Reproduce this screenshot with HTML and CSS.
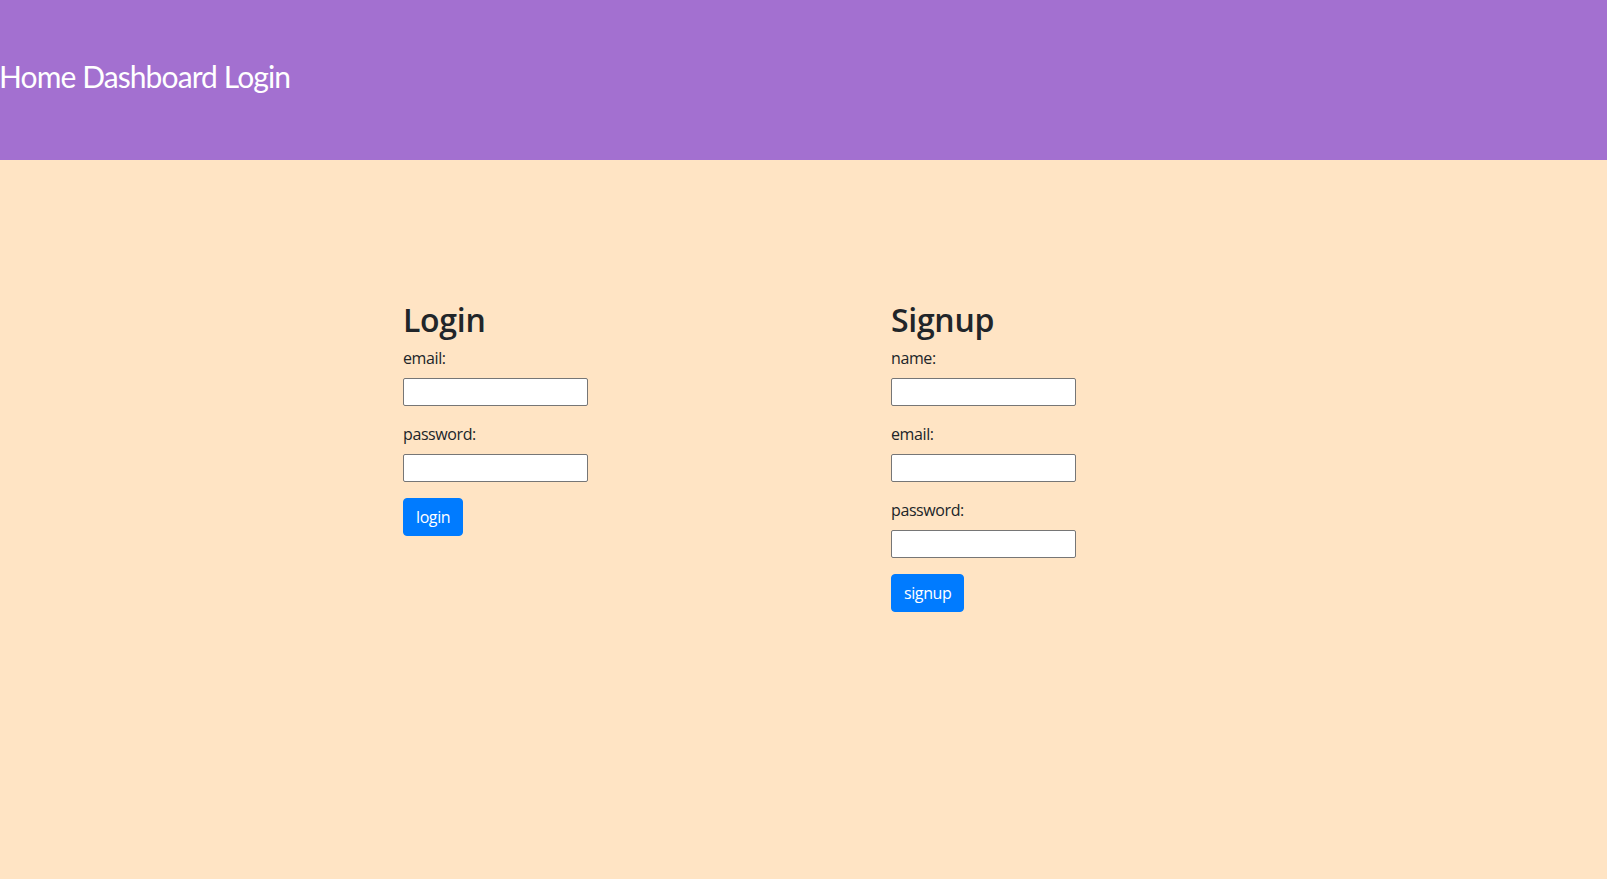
FILE: index.html
```html
<!DOCTYPE html>
<html lang="en">
<head>
<meta charset="utf-8">
<title>Login</title>
<link rel="stylesheet" href="styles.css">
</head>
<body>
<header class="topbar">
  <nav class="nav">
    <a class="nav-link" href="#">Home</a>
    <a class="nav-link" href="#">Dashboard</a>
    <a class="nav-link" href="#">Login</a>
  </nav>
</header>
<main class="main">
  <div class="forms">
    <section class="col">
      <h2 class="title">Login</h2>
      <form>
        <div class="form-group">
          <label class="label">email:</label>
          <input class="field" type="email">
        </div>
        <div class="form-group">
          <label class="label">password:</label>
          <input class="field" type="password">
        </div>
        <button class="btn" type="button">login</button>
      </form>
    </section>
    <section class="col">
      <h2 class="title">Signup</h2>
      <form>
        <div class="form-group">
          <label class="label">name:</label>
          <input class="field" type="text">
        </div>
        <div class="form-group">
          <label class="label">email:</label>
          <input class="field" type="email">
        </div>
        <div class="form-group">
          <label class="label">password:</label>
          <input class="field" type="password">
        </div>
        <button class="btn" type="button">signup</button>
      </form>
    </section>
  </div>
</main>
</body>
</html>
```
FILE: styles.css
```css
* { box-sizing: border-box; }
html, body { margin: 0; padding: 0; }
body {
  font-family: "Open Sans", "Noto Sans", sans-serif;
  font-size: 16px;
  line-height: 1.5;
  color: #212529;
  background: #ffe4c4;
  min-height: 100vh;
}
.topbar {
  background: #a370d0;
  height: 160px;
  padding-top: 54px;
}
.nav {
  font-family: Lato, "Open Sans", sans-serif;
  font-size: 30px;
  line-height: 45px;
  letter-spacing: -0.9px;
  white-space: nowrap;
  margin-left: -1px;
}
.nav-link {
  color: #ffffff;
  text-decoration: none;
}
.main {
  padding-top: 141px;
}
.forms {
  display: flex;
  padding-left: 403px;
}
.col {
  width: 488px;
}
.title {
  font-size: 32px;
  font-weight: 600;
  line-height: 1.2;
  margin: 0 0 7px 0;
  letter-spacing: -0.3px;
}
.form-group {
  margin-bottom: 16px;
}
.label {
  display: inline-block;
  margin-bottom: 8px;
  letter-spacing: -0.4px;
}
.field {
  display: block;
  width: 185px;
  height: 28px;
  border: 1px solid #767676;
  border-radius: 2px;
  background: #fff;
  padding: 1px 2px;
  font: inherit;
  font-size: 13px;
}
.btn {
  display: inline-block;
  font-family: inherit;
  font-size: 16px;
  line-height: 1.5;
  letter-spacing: -0.4px;
  color: #fff;
  background: #007bff;
  border: 1px solid #007bff;
  border-radius: 4px;
  padding: 6px 12px;
  cursor: pointer;
}
```
